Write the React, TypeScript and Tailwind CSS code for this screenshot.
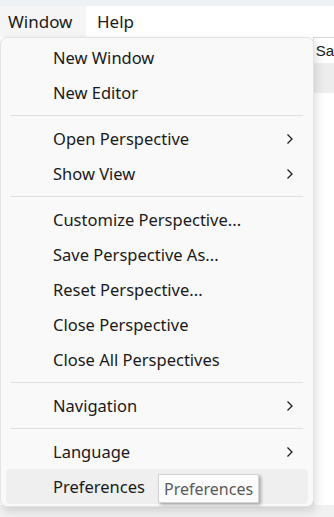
import React from "react";

type Item = { type: "item"; label: string; sub?: boolean; active?: boolean } | { type: "sep" };

const items: Item[] = [
  { type: "item", label: "New Window" },
  { type: "item", label: "New Editor" },
  { type: "sep" },
  { type: "item", label: "Open Perspective", sub: true },
  { type: "item", label: "Show View", sub: true },
  { type: "sep" },
  { type: "item", label: "Customize Perspective..." },
  { type: "item", label: "Save Perspective As..." },
  { type: "item", label: "Reset Perspective..." },
  { type: "item", label: "Close Perspective" },
  { type: "item", label: "Close All Perspectives" },
  { type: "sep" },
  { type: "item", label: "Navigation", sub: true },
  { type: "sep" },
  { type: "item", label: "Language", sub: true },
  { type: "item", label: "Preferences", active: true },
];

function Chevron() {
  return (
    <svg width="8" height="12" viewBox="0 0 8 12" className="absolute right-[14px] top-1/2 -translate-y-1/2">
      <path d="M1.5 1.5 L6 6 L1.5 10.5" fill="none" stroke="#1f1f1f" strokeWidth="1.3" />
    </svg>
  );
}

export default function App() {
  return (
    <div
      className="relative w-[334px] h-[517px] overflow-hidden bg-white text-[#1a1a1a]"
      style={{ fontFamily: '"Noto Sans", "Open Sans", sans-serif' }}
    >
      <div className="h-[6px] bg-[#eef1f6]" />
      <div className="flex h-[31px] items-center bg-white text-[17px]">
        <div className="flex h-full w-[86px] items-center bg-[#f5f5f5] px-[8px] pt-[1px]">Window</div>
        <div className="pl-[11px] pt-[1px]">Help</div>
      </div>
      <div className="flex h-[468px]">
        <div className="w-[316px]" />
        <div className="flex flex-1 flex-col border-l border-[#e0e0e0]">
          <div
            className="h-[26px] border-t border-[#d8d8d8] bg-white pl-[2px] pt-[3px] text-[15px] leading-[20px]"
            style={{ fontFamily: '"Liberation Sans", sans-serif' }}
          >
            Sa
          </div>
          <div className="h-[30px] bg-[#ededed]" />
          <div className="flex-1 bg-white" />
        </div>
      </div>
      <div className="h-[12px] bg-[#f1f1f1]" />

      {/* Popup menu */}
      <div className="absolute left-0 top-[37px] w-[314px] rounded-[7px] border border-[#e3e3e3] bg-[#f9f9f9] py-[2px] shadow-[2px_4px_10px_rgba(0,0,0,0.14)]">
        {items.map((it, i) =>
          it.type === "sep" ? (
            <div key={i} className="flex h-[11px] items-center px-[10px]">
              <div className="h-px w-[294px] bg-[#e0e0e0]" />
            </div>
          ) : (
            <div key={i} className="px-[5px]">
              <div
                className={`relative flex h-[35px] items-center rounded-[4px] pl-[47px] pt-[2px] text-[16.5px] ${
                  it.active ? "bg-[#efefef]" : ""
                }`}
              >
                {it.label}
                {it.sub && <Chevron />}
              </div>
            </div>
          )
        )}
      </div>

      {/* Tooltip */}
      <div className="absolute left-[158px] top-[474px] flex h-[29px] items-center border border-[#d4d4d4] bg-[#fbfbfb] px-[5px] pt-[1px] text-[16px] text-[#5a5a5a] shadow-[2px_2px_3px_rgba(0,0,0,0.3)]">
        Preferences
      </div>
    </div>
  );
}
